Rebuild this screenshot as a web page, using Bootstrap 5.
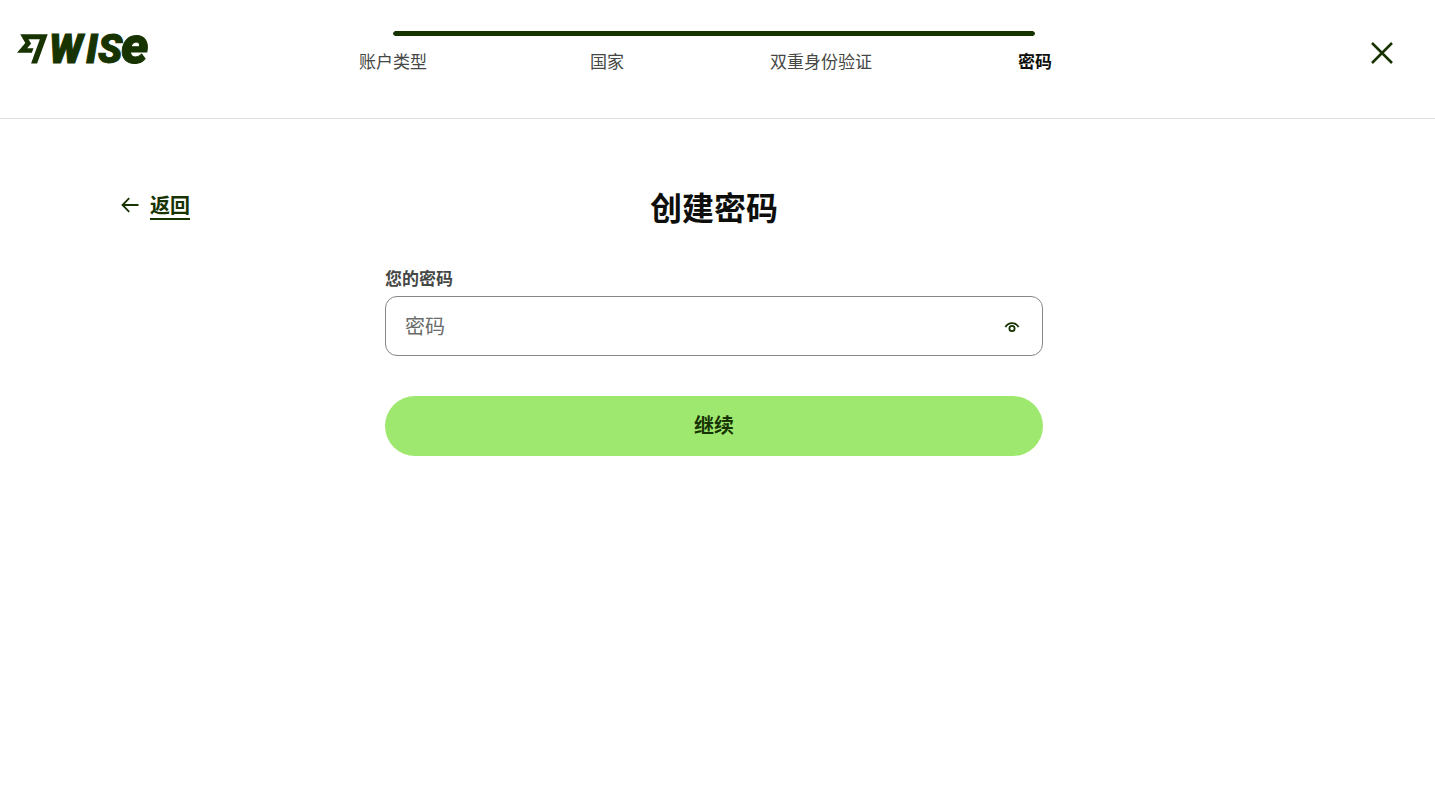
<!DOCTYPE html>
<html lang="zh-CN">
<head>
<meta charset="utf-8">
<meta name="viewport" content="width=device-width, initial-scale=1">
<title>创建密码 - Wise</title>
<link href="https://cdn.jsdelivr.net/npm/bootstrap@5.3.0/dist/css/bootstrap.min.css" rel="stylesheet">
<style>
  :root { --forest: #163300; --lime: #9fe870; --ink: #0e0f0c; --muted-ink: #454745; }
  body { font-family: "Noto Sans CJK SC", sans-serif; font-size: 17px; line-height: 24px; color: var(--muted-ink); }
  .top-bar { display: grid; grid-template-columns: minmax(0, 1fr) minmax(0, 856px) minmax(0, 1fr); min-height: 119px; padding: 13px 24px 0 17px; border-bottom: 1px solid #e0e1df; }
  .steps, .close-cell { padding-top: 18px; }
  .step-track { height: 5px; margin: 0 12.5%; background: transparent; border-radius: 4px; }
  .step-track .progress-bar { background: var(--forest); border-radius: 4px; }
  .step-list { margin-top: 13px; }
  .step-list .active { color: var(--ink); }
  .close-btn { color: var(--forest); padding: 11px 18px; line-height: 1; border: 0; }
  .page-body { display: grid; grid-template-columns: minmax(0, 1fr) minmax(0, 658px) minmax(0, 1fr); padding: 69px 127px 0 120px; }
  .back-link { color: var(--forest); font-size: 20px; line-height: 34px; gap: 10px; }
  .back-link span { text-decoration: underline; text-decoration-thickness: 2px; text-underline-offset: 5px; }
  .page-title { color: var(--ink); font-size: 32px; line-height: 36px; margin-bottom: 42px; }
  .field-label { margin-bottom: 6px; }
  .password-input { height: 60px; padding: 0 64px 2px 19px; font-size: 20px; color: var(--ink); border: 1px solid #868685; border-radius: 12px; }
  .password-input::placeholder { color: #6a6c6a; }
  .reveal-btn { color: var(--forest); padding: 2px 22px 0; line-height: 1; border: 0; }
  .continue-btn { height: 60px; margin-top: 40px; padding: 0 0 2px; font-size: 20px; color: var(--forest); background: var(--lime); }
  .continue-btn:hover { color: var(--forest); background: #80e142; }
</style>
</head>
<body class="bg-white">
<header class="top-bar">
  <a href="#" aria-label="Wise" class="d-block">
    <svg class="d-block" width="144" height="72" viewBox="0 0 144 72" fill="#163300" aria-hidden="true">
      <path transform="translate(0 20.500) scale(1.28)" d="M6.488 7.469 0 15.050h11.585l1.301-3.576H7.922l3.033-3.507.010-.092L8.993 4.480h8.873l-6.878 18.925h4.706L24 .595H2.543l3.945 6.874Z"/>
      <text y="50" font-family="Roboto, sans-serif" font-weight="900" font-style="italic" stroke="#163300" stroke-width="1"><tspan x="32" font-size="40">W</tspan><tspan x="69" font-size="40">I</tspan><tspan x="81" font-size="40">S</tspan><tspan x="104" font-size="52">e</tspan></text>
    </svg>
  </a>
  <nav class="steps" aria-label="进度">
    <div class="progress step-track" role="progressbar" aria-valuenow="100" aria-valuemin="0" aria-valuemax="100">
      <div class="progress-bar w-100"></div>
    </div>
    <ol class="step-list row g-0 list-unstyled text-center mb-0">
      <li class="col-3">账户类型</li>
      <li class="col-3">国家</li>
      <li class="col-3">双重身份验证</li>
      <li class="col-3 active fw-bold" aria-current="step">密码</li>
    </ol>
  </nav>
  <div class="close-cell text-end">
    <button type="button" class="btn close-btn" aria-label="关闭">
      <svg class="d-block" width="22" height="22" viewBox="0 0 22 22" fill="none" stroke="currentColor" stroke-width="2.5"><path d="M1 1l20 20M21 1 1 21"/></svg>
    </button>
  </div>
</header>
<main class="page-body">
  <div>
    <a href="#" class="back-link d-inline-flex align-items-center fw-bold text-decoration-none">
      <svg width="20" height="20" viewBox="0 0 20 20" fill="none" stroke="currentColor" stroke-width="1.8" aria-hidden="true"><path d="M18.500 10H3M9.200 3.200 2.500 10l6.700 6.800"/></svg>
      <span>返回</span>
    </a>
  </div>
  <form>
    <h1 class="page-title text-center fw-bold">创建密码</h1>
    <label for="password" class="field-label d-block fw-bold">您的密码</label>
    <div class="position-relative">
      <input type="password" id="password" class="form-control password-input" placeholder="密码">
      <button type="button" class="btn reveal-btn position-absolute top-0 end-0 h-100" aria-label="显示密码">
        <svg class="d-block" width="18" height="18" viewBox="0 0 18 18" fill="none" stroke="currentColor" stroke-width="1.8"><path d="M2.400 9.200C5.200 3.800 12.800 3.800 15.600 9.200"/><circle cx="9" cy="10.500" r="2.600"/></svg>
      </button>
    </div>
    <button type="submit" class="btn continue-btn w-100 rounded-pill border-0 fw-bold">继续</button>
  </form>
</main>
<script src="https://cdn.jsdelivr.net/npm/bootstrap@5.3.0/dist/js/bootstrap.bundle.min.js"></script>
</body>
</html>
